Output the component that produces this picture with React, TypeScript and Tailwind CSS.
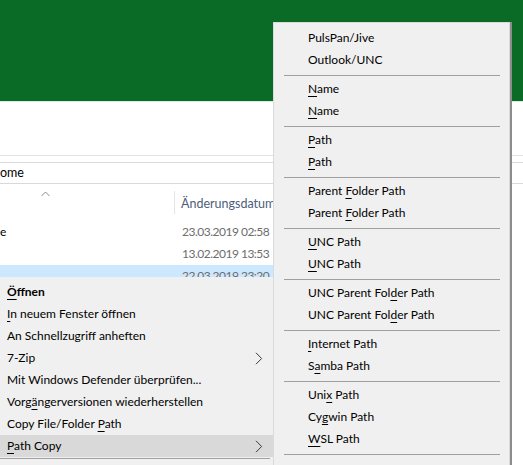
import React from "react";

type Item = { pre?: string; u?: string; post?: string; bold?: boolean; arrow?: boolean; active?: boolean };

function Label({ it }: { it: Item }) {
  return (
    <span className={it.bold ? "font-bold" : ""}>
      {it.pre}
      {it.u ? <span className="underline decoration-1 underline-offset-[3px]">{it.u}</span> : null}
      {it.post}
    </span>
  );
}

function Chevron() {
  return (
    <svg width="8" height="13" viewBox="0 0 8 13" className="ml-auto shrink-0">
      <polyline points="1,0.8 6.6,6.5 1,12.2" fill="none" stroke="#3a3a3a" strokeWidth="1" />
    </svg>
  );
}

const leftItems: Item[] = [
  { u: "Ö", post: "ffnen", bold: true },
  { u: "I", post: "n neuem Fenster öffnen" },
  { pre: "An Schnellzugriff anheften" },
  { pre: "7-Zip", arrow: true },
  { pre: "Mit Windows Defender überprüfen..." },
  { pre: "Vorg", u: "ä", post: "ngerversionen wiederherstellen" },
  { pre: "Copy File/Folder ", u: "P", post: "ath" },
  { u: "P", post: "ath Copy", arrow: true, active: true },
];

const subGroups: Item[][] = [
  [{ pre: "PulsPan/Jive" }, { pre: "Outlook/UNC" }],
  [{ u: "N", post: "ame" }, { u: "N", post: "ame" }],
  [{ u: "P", post: "ath" }, { u: "P", post: "ath" }],
  [
    { pre: "Parent ", u: "F", post: "older Path" },
    { pre: "Parent ", u: "F", post: "older Path" },
  ],
  [{ u: "U", post: "NC Path" }, { u: "U", post: "NC Path" }],
  [
    { pre: "UNC Parent Fol", u: "d", post: "er Path" },
    { pre: "UNC Parent Fol", u: "d", post: "er Path" },
  ],
  [{ u: "I", post: "nternet Path" }, { pre: "S", u: "a", post: "mba Path" }],
  [
    { pre: "Uni", u: "x", post: " Path" },
    { pre: "Cy", u: "g", post: "win Path" },
    { u: "W", post: "SL Path" },
  ],
];

export default function App() {
  return (
    <div className="relative w-[523px] h-[465px] overflow-hidden bg-white text-[12px] text-black font-['Lato','Noto_Sans',sans-serif]">
      {/* Explorer background */}
      <div className="h-[101px] bg-[#0a6b27]" />
      <div className="h-[55px] border-t border-[#d6ece4] border-b border-b-[#e3e3e3]" />
      <div className="h-[6px]" />
      <div className="h-[22px] border-y border-[#d9d9d9] flex items-center leading-[20px] text-[12.5px]">
        <span>ome</span>
      </div>
      {/* column header */}
      <div className="h-[37px] flex">
        <div className="w-[175px] border-r border-[#e5e5e5] my-[7px] relative">
          <svg width="9" height="6" viewBox="0 0 9 6" className="absolute left-[41px] top-[0px]">
            <polyline points="0.5,5 4.5,1 8.5,5" fill="none" stroke="#8a8a8a" strokeWidth="1" />
          </svg>
        </div>
        <div className="pl-[6px] pt-[12px] text-[#4c607a] leading-[16px] whitespace-nowrap text-[12.5px]">Änderungsdatum</div>
      </div>
      {/* rows */}
      <div className="h-[22px] flex items-center leading-[22px]">
        <div className="w-[182px]">e</div>
        <div className="text-[#6d6d6d] tracking-[-0.5px]">23.03.2019 02:58</div>
      </div>
      <div className="h-[22px] flex items-center leading-[22px]">
        <div className="w-[182px]" />
        <div className="text-[#6d6d6d] tracking-[-0.5px]">13.02.2019 13:53</div>
      </div>
      <div className="h-[22px] w-[510px] flex items-center leading-[22px] bg-[#cce8ff]">
        <div className="w-[182px]" />
        <div className="text-[#6d6d6d] tracking-[-0.5px]">22.03.2019 23:20</div>
      </div>

      {/* Context menu */}
      <div className="absolute left-0 top-[277px] w-[278px] h-[200px] bg-[#f0f0f0] border-r border-[#8c8c8c] pt-[4px]">
        {leftItems.map((it, i) => (
          <div
            key={i}
            className={
              "h-[22px] flex items-center pl-[7px] pr-[14px] whitespace-nowrap " +
              (it.active ? "bg-[#d9d9d9]" : "")
            }
          >
            <Label it={it} />
            {it.arrow ? <Chevron /> : null}
          </div>
        ))}
        <div className="mt-[1px] h-px w-[270px] bg-[#a0a0a0]" />
      </div>

      {/* Submenu */}
      <div className="absolute left-[273px] top-[22px] w-[237px] h-[460px] bg-[#f0f0f0] border border-[#dadada] shadow-[2px_0_0_#8c8c8c] pt-[4px]">
        {subGroups.map((g, gi) => (
          <div key={gi}>
            {g.map((it, i) => (
              <div key={i} className="h-[22px] flex items-center pl-[34px] whitespace-nowrap">
                <Label it={it} />
              </div>
            ))}
            <div className="mt-[4px] mb-[2px] ml-[10px] mr-[9px] h-px bg-[#a0a0a0]" />
          </div>
        ))}
      </div>
    </div>
  );
}
